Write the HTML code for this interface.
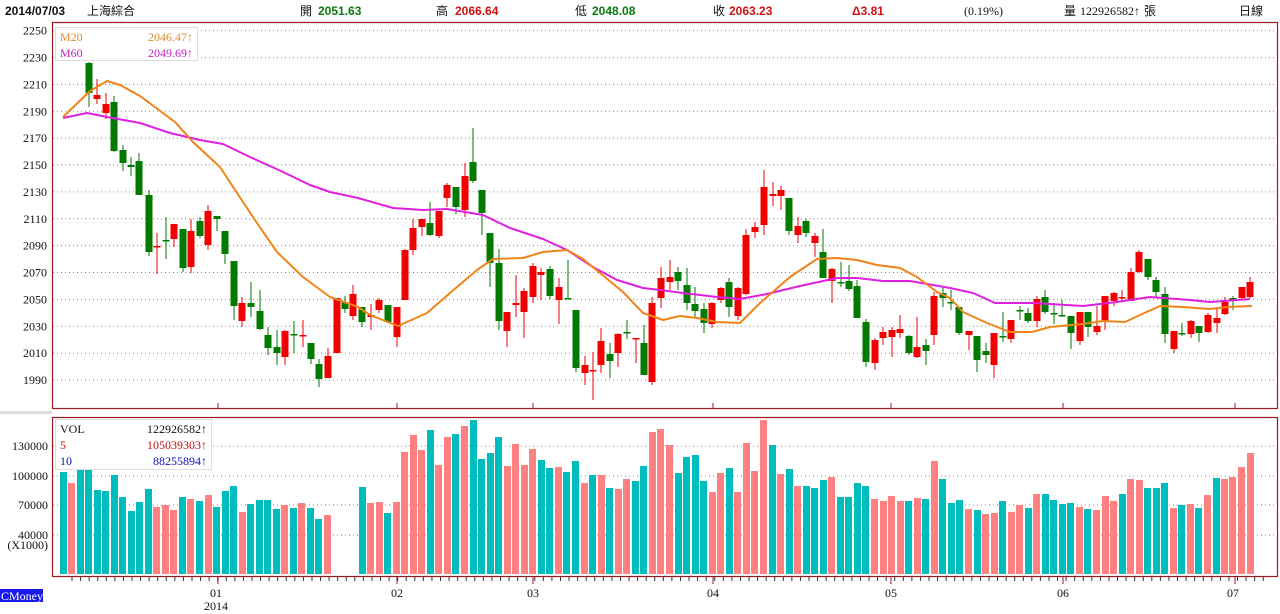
<!DOCTYPE html>
<html><head><meta charset="utf-8">
<style>
html,body{margin:0;padding:0;background:#fff;width:1280px;height:614px;overflow:hidden}
svg{display:block}
.t{font-family:"Liberation Serif","Noto Serif CJK SC",serif;font-size:12px}
.h{font-family:"Liberation Sans","Noto Sans CJK TC",sans-serif;font-size:12px}
</style></head><body>
<svg id="s" width="1280" height="614" xmlns="http://www.w3.org/2000/svg">
<rect x="0" y="0" width="1280" height="614" fill="#fff"/>
<g class="h">
<text x="3" y="15" font-weight="bold" fill="#111">2014/07/03</text>
<text x="72" y="15" fill="#111">上海綜合</text>
<text x="246" y="15" fill="#111">開</text><text x="262" y="15" font-weight="bold" fill="#0a7a0a">2051.63</text>
<text x="356" y="15" fill="#111">高</text><text x="372" y="15" font-weight="bold" fill="#d01010">2066.64</text>
<text x="470" y="15" fill="#111">低</text><text x="486" y="15" font-weight="bold" fill="#0a7a0a">2048.08</text>
<text x="699" y="15" fill="#111">收</text><text x="715" y="15" font-weight="bold" fill="#d01010">2063.23</text>
<text x="813" y="15" font-weight="bold" fill="#d01010">Δ3.81</text>
<text x="904" y="15" fill="#111" class="t">(0.19%)</text>
<text x="987" y="15" fill="#111">量</text><text x="1003" y="15" fill="#111" class="t">122926582↑</text><text x="1070" y="15" fill="#111">張</text>
<text x="1129" y="15" fill="#111">日線</text>
</g>
<g id="g"></g>
</svg>
<script>
var NS="http://www.w3.org/2000/svg",g=document.getElementById('g');
function el(n,a,txt){var e=document.createElementNS(NS,n);for(var k in a)e.setAttribute(k,a[k]);if(txt!=null)e.textContent=txt;g.appendChild(e);return e;}
var hs=document.querySelectorAll('.h text');
var labs=[2250,2230,2210,2190,2170,2150,2130,2110,2090,2070,2050,2030,2010,1990];
for(var i=0;i<14;i++){var y=30.7+i*26.87;
el('line',{x1:53,x2:1276,y1:y,y2:y,stroke:'#888','stroke-dasharray':'1,3','stroke-width':1});
el('text',{x:47,y:y+4,'text-anchor':'end','class':'t',fill:'#111'},labs[i]);}
var vl=[[446,'130000'],[476,'100000'],[505,'70000'],[535,'40000']];
vl.forEach(function(v){el('line',{x1:53,x2:1276,y1:v[0],y2:v[0],stroke:'#888','stroke-dasharray':'1,3'});
el('text',{x:48,y:v[0]+4,'text-anchor':'end','class':'t',fill:'#111'},v[1]);});
el('text',{x:48,y:549,'text-anchor':'end','class':'t',fill:'#111'},'(X1000)');
var C=[[89,63,93,62,107,'g'],[97,95,99,79,104,'r'],[106,104,113,93,119,'r'],[114,102,151,96,152,'g'],[123,150,163,145,171,'g'],[131,165,167,157,176,'g'],[139,161,195,153,195,'g'],[149,195,252,190,256,'g'],[157,246,247,233,274,'r'],[166,240,241,217,259,'g'],[174,224,239,224,247,'r'],[183,229,268,229,272,'g'],[191,231,267,219,273,'r'],[200,221,236,217,238,'g'],[208,211,245,205,250,'r'],[217,216,219,216,231,'g'],[225,231,254,231,264,'g'],[234,261,306,261,320,'g'],[242,303,321,297,327,'r'],[251,303,307,282,317,'g'],[260,311,329,290,330,'g'],[268,335,348,327,355,'g'],[277,347,353,330,365,'g'],[285,331,357,330,365,'r'],[294,334,335,321,353,'g'],[303,335,336,320,347,'r'],[311,343,359,343,364,'g'],[319,364,379,359,387,'g'],[328,356,378,348,378,'r'],[337,298,353,298,353,'r'],[345,302,309,296,313,'g'],[353,294,316,285,320,'r'],[362,307,322,307,327,'g'],[371,315,317,304,330,'r'],[379,300,310,298,313,'r'],[388,305,322,305,322,'g'],[397,307,337,307,347,'r'],[405,250,300,249,300,'r'],[413,228,250,219,255,'r'],[422,219,227,219,236,'r'],[430,223,235,202,236,'g'],[439,211,236,211,238,'r'],[447,185,198,183,207,'r'],[456,187,207,187,214,'g'],[465,176,210,163,217,'r'],[473,162,181,128,183,'g'],[482,190,213,190,235,'g'],[490,233,263,233,287,'g'],[499,263,321,249,330,'g'],[507,312,331,312,347,'r'],[516,303,305,275,317,'r'],[524,291,312,288,338,'r'],[533,266,297,263,303,'r'],[541,272,275,268,300,'r'],[550,269,296,266,299,'g'],[559,287,300,278,324,'r'],[568,298,299,260,298,'g'],[576,310,368,310,372,'g'],[585,365,373,356,385,'r'],[593,370,371,352,400,'r'],[601,341,365,328,373,'r'],[610,354,361,343,378,'g'],[618,334,353,333,367,'r'],[627,332,333,320,339,'g'],[636,338,339,338,363,'r'],[644,343,375,325,375,'g'],[652,303,382,297,385,'r'],[661,278,298,267,308,'r'],[670,277,282,260,290,'r'],[678,272,281,267,290,'g'],[687,285,303,268,310,'g'],[695,304,311,287,317,'g'],[704,309,323,303,333,'g'],[712,303,324,302,328,'r'],[721,288,300,287,303,'r'],[729,282,307,278,317,'g'],[738,288,316,287,320,'r'],[746,235,294,229,295,'r'],[755,227,232,222,238,'r'],[764,187,225,170,235,'r'],[773,194,196,182,206,'r'],[781,190,196,186,210,'r'],[789,198,231,198,235,'g'],[798,226,235,217,243,'r'],[806,221,233,219,237,'g'],[815,236,243,233,257,'r'],[823,252,278,229,278,'g'],[832,269,281,268,303,'r'],[841,282,283,262,287,'g'],[849,281,289,265,291,'g'],[857,286,318,280,318,'g'],[866,322,362,319,367,'g'],[875,340,363,338,370,'r'],[883,332,338,327,345,'r'],[892,330,337,327,357,'r'],[900,329,333,315,338,'r'],[909,336,353,335,355,'g'],[917,347,357,317,358,'r'],[926,345,351,339,365,'g'],[934,296,335,292,345,'r'],[943,293,298,286,307,'g'],[951,302,303,290,310,'g'],[959,307,333,307,335,'g'],[969,331,335,331,350,'r'],[977,336,360,336,372,'g'],[986,351,355,343,363,'g'],[994,333,365,333,378,'r'],[1003,336,337,312,342,'g'],[1011,320,339,320,343,'r'],[1020,310,311,306,320,'g'],[1028,313,321,308,323,'g'],[1037,299,321,296,327,'r'],[1045,297,312,290,314,'g'],[1054,313,314,303,324,'g'],[1062,315,316,300,317,'g'],[1071,316,333,316,349,'g'],[1080,312,341,312,345,'r'],[1088,312,327,312,337,'g'],[1097,326,332,306,335,'r'],[1105,296,322,296,330,'r'],[1114,293,301,292,306,'r'],[1122,297,298,290,300,'r'],[1131,272,301,268,301,'r'],[1139,252,272,250,273,'r'],[1148,259,277,259,280,'g'],[1156,280,292,277,297,'g'],[1165,294,334,287,343,'g'],[1174,331,349,331,353,'r'],[1182,333,334,323,336,'g'],[1191,321,334,320,338,'r'],[1199,326,333,326,342,'g'],[1208,315,332,313,333,'r'],[1217,318,323,308,333,'r'],[1225,302,314,297,315,'r'],[1233,298,299,296,310,'g'],[1242,287,298,287,300,'r'],[1250,282,297,277,298,'r']];
C.forEach(function(c){var col=c[5]=='r'?'#f00000':'#007a00';
el('line',{x1:c[0],x2:c[0],y1:c[3],y2:c[4],stroke:col,'stroke-width':1});
var h=Math.max(1.5,c[2]-c[1]);el('rect',{x:c[0]-3.5,y:c[1],width:7,height:h,fill:col});});
function pl(pts,col){el('polyline',{points:pts.map(function(p){return p.join(',')}).join(' '),fill:'none',stroke:col,'stroke-width':2,'stroke-linejoin':'round'});}
pl([[63,118],[87,113],[107,117],[140,123],[170,133],[200,140],[223,144],[250,157],[283,172],[310,185],[330,192],[358,198],[393,208],[423,210],[447,209],[483,215],[510,228],[543,239],[567,250],[593,267],[617,280],[643,288],[660,290],[683,293],[717,297],[740,299],[767,294],[800,286],[837,278],[857,278],[883,281],[910,281],[933,285],[950,288],[973,293],[995,303],[1033,303],[1083,306],[1117,302],[1150,297],[1190,300],[1210,302],[1250,299]],'#e020e0');
pl([[63,117],[90,91],[107,81],[120,85],[140,96],[175,122],[193,142],[220,167],[237,193],[257,223],[277,252],[303,277],[330,297],[358,307],[370,315],[398,326],[427,313],[450,293],[477,270],[493,259],[523,258],[543,252],[567,250],[583,259],[623,292],[643,313],[663,320],[680,316],[697,318],[717,322],[740,323],[760,303],[790,277],[817,259],[837,258],[857,260],[877,265],[900,268],[917,277],[937,292],[950,298],[963,312],[987,323],[1010,332],[1032,332],[1050,327],[1083,324],[1103,321],[1125,322],[1140,315],[1160,306],[1183,307],[1210,309],[1227,307],[1252,306]],'#f08418');
var V=[[60,472,'t'],[68,483,'s'],[77,469,'t'],[85,469,'t'],[94,490,'t'],[102,491,'t'],[111,475,'t'],[119,497,'t'],[128,511,'t'],[136,502,'t'],[145,489,'t'],[153,507,'s'],[162,505,'s'],[170,510,'s'],[179,497,'t'],[187,499,'s'],[196,501,'t'],[205,495,'s'],[213,507,'t'],[222,491,'t'],[230,486,'t'],[239,512,'s'],[247,504,'t'],[256,500,'t'],[264,500,'t'],[273,509,'t'],[281,505,'s'],[290,508,'t'],[298,503,'s'],[307,508,'t'],[315,519,'t'],[324,515,'s'],
[359,487,'t'],[367,503,'s'],[376,502,'s'],[384,513,'t'],[393,502,'s'],[401,452,'s'],[410,435,'s'],[418,450,'s'],[427,430,'t'],[435,465,'s'],[444,437,'s'],[452,434,'t'],[461,426,'s'],[470,420,'t'],[478,459,'t'],[487,453,'t'],[495,437,'t'],[504,466,'s'],[512,444,'s'],[521,465,'s'],[529,449,'s'],[538,460,'t'],[546,468,'t'],[555,467,'s'],[563,472,'t'],[572,461,'t'],[581,483,'s'],[589,475,'t'],[598,475,'s'],[606,488,'t'],[615,489,'s'],[623,479,'s'],[632,481,'t'],[640,466,'t'],[649,432,'s'],[657,429,'s'],[666,445,'s'],[675,473,'t'],[683,457,'t'],[692,455,'t'],[700,481,'t'],[709,492,'s'],[717,473,'s'],[726,468,'t'],[734,492,'s'],[743,443,'s'],[751,471,'s'],[760,420,'s'],[769,445,'t'],[777,474,'s'],[786,469,'t'],[794,486,'s'],[803,486,'t'],[811,488,'t'],[820,480,'t'],[828,477,'s'],[837,497,'t'],[845,497,'t'],[854,483,'t'],[862,486,'t'],[871,499,'s'],[880,501,'s'],[888,496,'s'],[897,501,'s'],[905,501,'t'],[914,498,'s'],[922,499,'t'],[931,461,'s'],[939,479,'t'],[948,503,'t'],[956,500,'t'],[965,509,'s'],[974,510,'t'],[982,514,'s'],[991,513,'s'],[999,501,'t'],[1008,512,'s'],[1016,505,'s'],[1025,508,'t'],[1033,494,'s'],[1042,494,'t'],[1050,500,'t'],[1059,504,'t'],[1067,503,'t'],[1076,507,'s'],[1084,509,'t'],[1093,510,'s'],[1102,496,'s'],[1110,501,'s'],[1119,494,'t'],[1127,479,'s'],[1136,480,'s'],[1144,488,'t'],[1153,488,'t'],[1161,483,'t'],[1170,508,'s'],[1178,505,'t'],[1187,504,'s'],[1195,508,'t'],[1204,495,'s'],[1213,478,'t'],[1221,479,'s'],[1229,477,'s'],[1238,467,'s'],[1247,453,'s']];
V.forEach(function(v){el('rect',{x:v[0],y:v[1],width:7,height:574-v[1],fill:v[2]=='t'?'#00bdbd':'#ff8080'});});
el('rect',{x:52.5,y:22.5,width:1225,height:386,fill:'none',stroke:'#a01820','stroke-width':1.2});
el('rect',{x:52.5,y:417.5,width:1225,height:159,fill:'none',stroke:'#a01820','stroke-width':1.2});
el('rect',{x:0,y:411,width:52,height:3,fill:'#ddd'});
[218,397,533,713,891,1063,1235].forEach(function(x){el('line',{x1:x,x2:x,y1:403,y2:408,stroke:'#a01820'});el('line',{x1:x,x2:x,y1:577,y2:584,stroke:'#a01820'});});
for(var x=72;x<1270;x+=8.57){el('line',{x1:x,x2:x,y1:577,y2:581,stroke:'#333'});}
[[216,'01'],[397,'02'],[533,'03'],[713,'04'],[891,'05'],[1063,'06'],[1233,'07']].forEach(function(m){el('text',{x:m[0],y:597,'text-anchor':'middle','class':'t',fill:'#111'},m[1]);});
el('text',{x:216,y:610,'text-anchor':'middle','class':'t',fill:'#111'},'2014');
el('rect',{x:55.5,y:27.5,width:142,height:33,fill:'#fff',stroke:'#ddd'});
el('text',{x:60,y:41,'class':'t',fill:'#e08a2a'},'M20');el('text',{x:193,y:41,'text-anchor':'end','class':'t',fill:'#e08a2a'},'2046.47↑');
el('text',{x:60,y:57,'class':'t',fill:'#c020c0'},'M60');el('text',{x:193,y:57,'text-anchor':'end','class':'t',fill:'#c020c0'},'2049.69↑');
el('rect',{x:55.5,y:419.5,width:156,height:50,fill:'#fff',stroke:'#ddd'});
el('text',{x:60,y:433,'class':'t',fill:'#111'},'VOL');el('text',{x:207,y:433,'text-anchor':'end','class':'t',fill:'#111'},'122926582↑');
el('text',{x:60,y:449,'class':'t',fill:'#c01010'},'5');el('text',{x:207,y:449,'text-anchor':'end','class':'t',fill:'#c01010'},'105039303↑');
el('text',{x:60,y:465,'class':'t',fill:'#1010b0'},'10');el('text',{x:207,y:465,'text-anchor':'end','class':'t',fill:'#1010b0'},'88255894↑');
el('rect',{x:0,y:589,width:43,height:13,fill:'#1818e8'});
el('text',{x:1,y:600,'class':'t',fill:'#fff'},'CMoney');
var P=[5,87,300,318,436,455,575,592,713,729,852,964,1064,1080,1144,1239];
hs.forEach(function(t,i){t.setAttribute('x',P[i]);});
</script>
</body></html>
